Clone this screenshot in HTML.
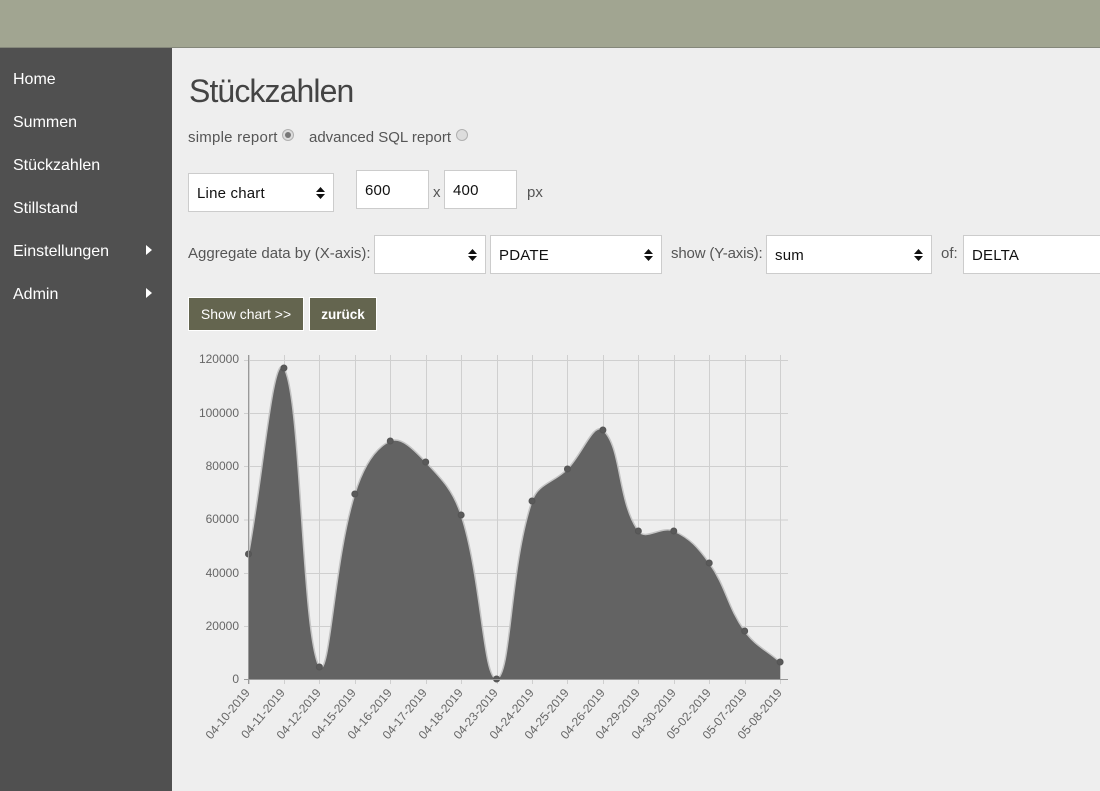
<!DOCTYPE html>
<html><head><meta charset="utf-8"><title>Stückzahlen</title>
<style>
html,body{margin:0;padding:0;width:1100px;height:791px;overflow:hidden;background:#eee;font-family:"Liberation Sans",sans-serif}
.a{position:absolute;white-space:nowrap}
#top{left:0;top:0;width:1100px;height:47px;background:#a1a591;border-bottom:1px solid #84877a}
#side{left:0;top:48px;width:172px;height:743px;background:#505050}
.n{left:13px;color:#fff;font-size:16px;line-height:20px}
.t{color:#555;font-size:15px;line-height:20px}
.box{box-sizing:border-box;background:#fff;border:1px solid #ccc;color:#111;font-size:15px;line-height:39px;padding-left:8px;height:39px;letter-spacing:.2px}
.box svg{position:absolute;right:8px;top:13px}
.btn{background:#64654f;border:1px solid #fff;box-sizing:border-box;height:34px;line-height:32px;color:#fff;font-size:14px;text-align:center}
.arr{left:146px;width:0;height:0;border-left:6px solid #fff;border-top:5px solid transparent;border-bottom:5px solid transparent}
svg text{font-family:"Liberation Sans",sans-serif;font-size:12px;fill:#666}
.r{width:10px;height:10px;border-radius:50%;border:1px solid #b0b0b0;background:#ddd}
</style></head><body>
<div class="a" id="top"></div>
<div class="a" id="side"></div>
<div class="a n" style="top:70px">Home</div>
<div class="a n" style="top:113px">Summen</div>
<div class="a n" style="top:156px">Stückzahlen</div>
<div class="a n" style="top:199px">Stillstand</div>
<div class="a n" style="top:242px">Einstellungen</div>
<div class="a n" style="top:285px">Admin</div>
<div class="a arr" style="top:245px"></div>
<div class="a arr" style="top:288px"></div>

<div class="a" style="left:189px;top:70px;font-size:32px;line-height:42px;color:#444;letter-spacing:-.9px">Stückzahlen</div>
<div class="a t" style="left:188px;top:128px;letter-spacing:.23px">simple report</div>
<div class="a r" style="left:282px;top:129px"><div class="a" style="left:2px;top:2px;width:6px;height:6px;border-radius:50%;background:#777"></div></div>
<div class="a t" style="left:309px;top:128px">advanced SQL report</div>
<div class="a r" style="left:456px;top:129px"></div>

<div class="a box" style="left:188px;top:173px;width:146px">Line chart<svg width="9" height="12"><path d="M4.5 0L9 5H0ZM0 7H9L4.5 12Z" fill="#111"/></svg></div>
<div class="a box" style="left:356px;top:170px;width:73px">600</div>
<div class="a t" style="left:433px;top:183px">x</div>
<div class="a box" style="left:444px;top:170px;width:73px">400</div>
<div class="a t" style="left:527px;top:183px">px</div>

<div class="a t" style="left:188px;top:244px">Aggregate data by (X-axis):</div>
<div class="a box" style="left:374px;top:235px;width:112px"><svg width="9" height="12"><path d="M4.5 0L9 5H0ZM0 7H9L4.5 12Z" fill="#111"/></svg></div>
<div class="a box" style="left:490px;top:235px;width:172px">PDATE<svg width="9" height="12"><path d="M4.5 0L9 5H0ZM0 7H9L4.5 12Z" fill="#111"/></svg></div>
<div class="a t" style="left:671px;top:244px;letter-spacing:-.15px">show (Y-axis):</div>
<div class="a box" style="left:766px;top:235px;width:166px">sum<svg width="9" height="12"><path d="M4.5 0L9 5H0ZM0 7H9L4.5 12Z" fill="#111"/></svg></div>
<div class="a t" style="left:941px;top:244px">of:</div>
<div class="a box" style="left:963px;top:235px;width:160px">DELTA</div>

<div class="a btn" style="left:188px;top:297px;width:116px">Show chart &gt;&gt;</div>
<div class="a btn" style="left:309px;top:297px;width:68px;font-weight:bold;font-size:13.5px;line-height:33px">zurück</div>

<svg class="a" style="left:0;top:0" width="1100" height="791" id="c">
<g id="grid" stroke="#000" stroke-opacity=".13" fill="none"></g>
<path id="area" fill="#636363"></path>
<path id="line" fill="none" stroke="#c4c4c4" stroke-width="1.5"></path>
<g id="dots" fill="#5a5a5a" stroke="#555"></g>
<path d="M248.5 355V684M244 679.5H788" stroke="#999" fill="none"/>
<g text-anchor="end">
<text x="239" y="363">120000</text>
<text x="239" y="417">100000</text>
<text x="239" y="470">80000</text>
<text x="239" y="523">60000</text>
<text x="239" y="577">40000</text>
<text x="239" y="630">20000</text>
<text x="239" y="683">0</text>
<text transform="translate(250.5 693) rotate(-50)">04-10-2019</text>
<text transform="translate(285.5 693) rotate(-50)">04-11-2019</text>
<text transform="translate(321.5 693) rotate(-50)">04-12-2019</text>
<text transform="translate(356.5 693) rotate(-50)">04-15-2019</text>
<text transform="translate(392.5 693) rotate(-50)">04-16-2019</text>
<text transform="translate(427.5 693) rotate(-50)">04-17-2019</text>
<text transform="translate(463.5 693) rotate(-50)">04-18-2019</text>
<text transform="translate(498.5 693) rotate(-50)">04-23-2019</text>
<text transform="translate(534.5 693) rotate(-50)">04-24-2019</text>
<text transform="translate(569.5 693) rotate(-50)">04-25-2019</text>
<text transform="translate(605.5 693) rotate(-50)">04-26-2019</text>
<text transform="translate(640.5 693) rotate(-50)">04-29-2019</text>
<text transform="translate(676.5 693) rotate(-50)">04-30-2019</text>
<text transform="translate(711.5 693) rotate(-50)">05-02-2019</text>
<text transform="translate(747.5 693) rotate(-50)">05-07-2019</text>
<text transform="translate(782.5 693) rotate(-50)">05-08-2019</text>
</g>
</svg>
<script>
var ys=[554,368,667,494,441,462,515,679,501,469,430,531,531,563,631,662];
var P=ys.map(function(y,i){return {x:248.5+i*35.44,y:y}}),T=.4,B=679.5;
var g='',k;
[360,413,466,519.5,573,626].forEach(function(y){g+='M244 '+(y+.5)+'H788'});
P.forEach(function(p){var x=Math.round(p.x)+.5;g+='M'+x+' 355V684'});
document.getElementById('grid').innerHTML='<path d="'+g+'"/>';
P.forEach(function(p,i){
 var a=P[i-1]||p,b=P[i+1]||p,d1=Math.hypot(p.x-a.x,p.y-a.y),d2=Math.hypot(b.x-p.x,b.y-p.y),s=d1+d2||1;
 p.px=p.x-T*d1/s*(b.x-a.x);p.py=Math.min(B,p.y-T*d1/s*(b.y-a.y));
 p.nx=p.x+T*d2/s*(b.x-a.x);p.ny=Math.min(B,p.y+T*d2/s*(b.y-a.y));
});
var d='M'+P[0].x+' '+P[0].y;
for(k=1;k<P.length;k++){var u=P[k-1],v=P[k];d+='C'+[u.nx,u.ny,v.px,v.py,v.x,v.y].map(function(n){return n.toFixed(1)}).join(' ')}
document.getElementById('line').setAttribute('d',d);
document.getElementById('area').setAttribute('d',d+'L'+P[15].x+' '+B+'L'+P[0].x+' '+B+'Z');
document.getElementById('dots').innerHTML=P.map(function(p){return '<circle cx="'+p.x+'" cy="'+p.y+'" r="3"/>'}).join('');
</script>
</body></html>
